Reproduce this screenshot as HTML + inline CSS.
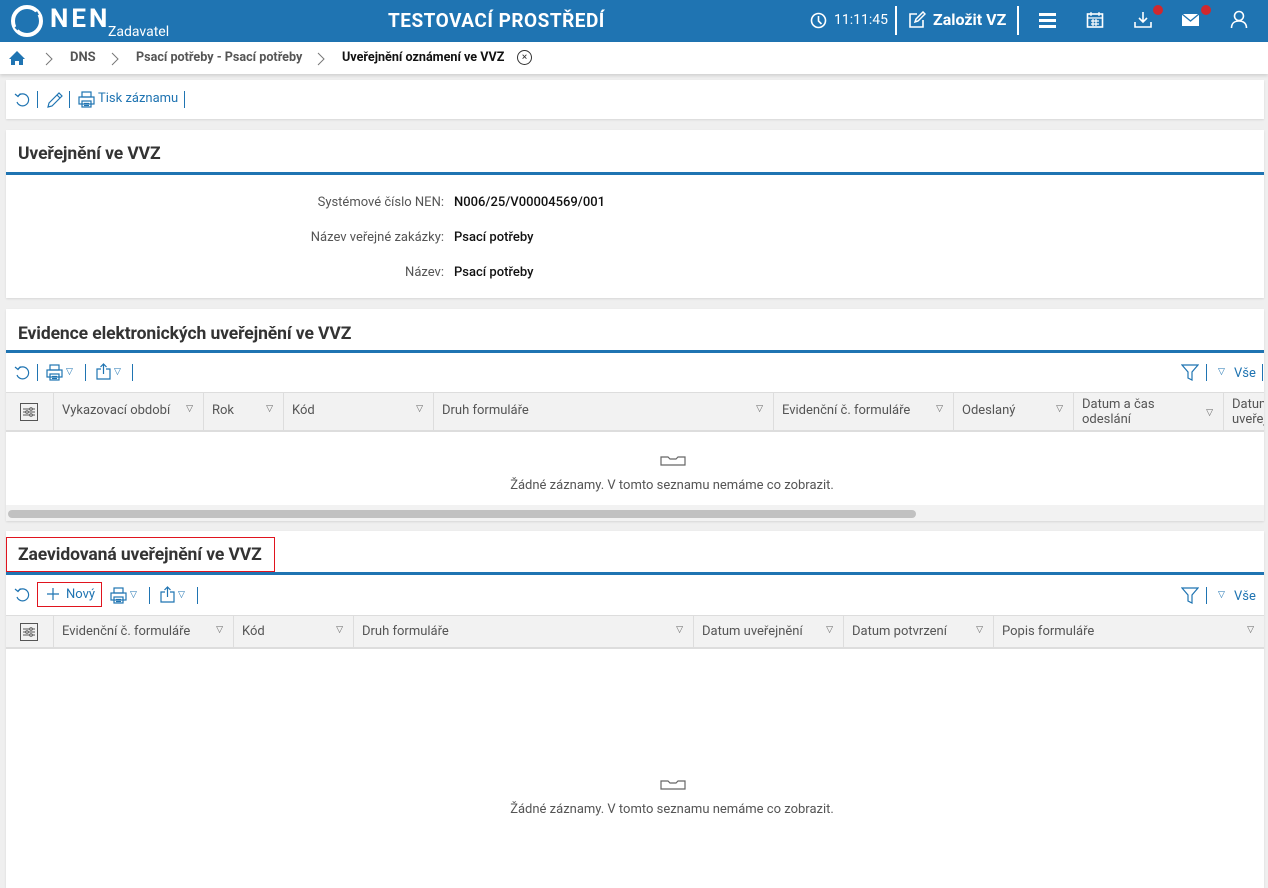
<!DOCTYPE html>
<html><head><meta charset="utf-8"><style>
*{box-sizing:border-box;margin:0;padding:0}
body{width:1268px;height:888px;overflow:hidden;background:#efefef;font-family:"Roboto","Liberation Sans",sans-serif;font-size:13px;color:#333;position:relative}
.abs{position:absolute}
.hdr{left:0;top:0;width:1268px;height:42px;background:#1f74b2;color:#fff}
.bc{left:0;top:42px;width:1268px;height:32px;background:#fff;box-shadow:0 2px 3px rgba(0,0,0,.12)}
.panel{background:#fff;left:6px;width:1258px;box-shadow:0 1px 2px rgba(0,0,0,.1)}
.title{font-size:17.5px;font-weight:bold;color:#333;letter-spacing:-.1px}
.bl{height:3px;background:#1f74b2;left:0;width:1258px}
.th{background:#f2f2f2;border-top:1px solid #ddd;border-bottom:2px solid #ddd;height:40px}
.col{position:absolute;top:0;height:100%;border-left:1px solid #ddd;color:#555;font-size:13px;padding:8px 8px}
.tri{position:absolute;right:10px;top:11px;font-size:9px;color:#666}
.sep{position:absolute;width:1px;height:17px;background:#1f74b2}
.blue{color:#1f74b2}
.empty{color:#555;font-size:13px;text-align:center;width:1332px;left:0}
svg.i{position:absolute;fill:none;stroke:#1f74b2;stroke-width:1.2}
.t{position:absolute;font-size:9px;color:#1f74b2}
</style></head><body>
<div class="abs hdr">
 <svg class="abs" style="left:10px;top:5px" width="34" height="32" viewBox="0 0 34 32"><circle cx="17" cy="16" r="14" fill="none" stroke="#fff" stroke-width="4"/><path d="M6 24 C12 18 20 12 28 8" stroke="#1f74b2" stroke-width="4" fill="none"/></svg>
 <div class="abs" style="left:50px;top:4px;font-size:26px;font-weight:bold;letter-spacing:3px">NEN</div>
 <div class="abs" style="left:108px;top:24px;font-size:14px">Zadavatel</div>
 <div class="abs" style="left:388px;top:9px;font-size:19px;font-weight:bold;letter-spacing:.5px">TESTOVACÍ PROSTŘEDÍ</div>
 <svg class="abs" style="left:810px;top:12px" width="17" height="17"><circle cx="8.5" cy="8.5" r="7" fill="none" stroke="#fff" stroke-width="1.6"/><path d="M8.5 4v5l3 3" stroke="#fff" stroke-width="1.6" fill="none"/></svg>
 <div class="abs" style="left:834px;top:12px;font-size:14px">11:11:45</div>
 <div class="abs" style="left:895px;top:6px;width:2px;height:29px;background:#fff"></div>
 <svg class="abs" style="left:908px;top:11px" width="18" height="18"><path d="M9 3H2v13h13V9" stroke="#fff" stroke-width="1.6" fill="none"/><path d="M7 11l1-3 7-7 2 2-7 7z" stroke="#fff" stroke-width="1.5" fill="none"/></svg>
 <div class="abs" style="left:933px;top:10px;font-size:16px;font-weight:bold">Založit VZ</div>
 <div class="abs" style="left:1017px;top:6px;width:2px;height:29px;background:#fff"></div>
 <div class="abs" style="left:1039px;top:13px;width:17px;height:3px;background:#fff;box-shadow:0 6px 0 #fff,0 12px 0 #fff"></div>
 <svg class="abs" style="left:1086px;top:11px" width="18" height="18"><rect x="1.5" y="3" width="15" height="13" fill="none" stroke="#fff" stroke-width="1.6"/><path d="M1.5 7h15M5 1v4M13 1v4M5 10h8M5 13h8M7 8v7M10 8v7" stroke="#fff" stroke-width="1.2"/></svg>
 <svg class="abs" style="left:1134px;top:11px" width="18" height="18"><path d="M9 1v10M5 7l4 4 4-4M1 11v5h16v-5" stroke="#fff" stroke-width="1.6" fill="none"/></svg>
 <div class="abs" style="left:1153px;top:5px;width:10px;height:10px;border-radius:50%;background:#d0282e"></div>
 <svg class="abs" style="left:1181px;top:13px" width="19" height="14"><rect x="1" y="1" width="17" height="12" fill="#fff"/><path d="M1 1l8.5 7L18 1" stroke="#1f74b2" stroke-width="1.3" fill="none"/></svg>
 <div class="abs" style="left:1201px;top:5px;width:10px;height:10px;border-radius:50%;background:#d0282e"></div>
 <svg class="abs" style="left:1230px;top:10px" width="18" height="19"><circle cx="9" cy="6" r="4.5" fill="none" stroke="#fff" stroke-width="1.6"/><path d="M1.5 18c0-5 3.5-7 7.5-7s7.5 2 7.5 7" stroke="#fff" stroke-width="1.6" fill="none"/></svg>
</div>
<div class="abs bc">
 <svg class="abs" style="left:8px;top:8px" width="18" height="16"><path d="M9 1L1 9h2v6h4v-4h4v4h4V9h2z" fill="#1f74b2"/></svg>
 <svg class="abs" style="left:45px;top:10px" width="8" height="14"><path d="M1 1l6 6-6 6" stroke="#777" fill="none"/></svg>
 <div class="abs" style="left:70px;top:8px;color:#555;font-weight:bold">DNS</div>
 <svg class="abs" style="left:111px;top:10px" width="8" height="14"><path d="M1 1l6 6-6 6" stroke="#777" fill="none"/></svg>
 <div class="abs" style="left:136px;top:8px;color:#555;font-weight:bold;font-size:12.6px">Psací potřeby - Psací potřeby</div>
 <svg class="abs" style="left:317px;top:10px" width="8" height="14"><path d="M1 1l6 6-6 6" stroke="#777" fill="none"/></svg>
 <div class="abs" style="left:342px;top:8px;color:#111;font-weight:bold;font-size:12.6px">Uveřejnění oznámení ve VVZ</div>
 <div class="abs" style="left:517px;top:8px;width:15px;height:15px;border:1px solid #333;border-radius:50%;font-size:10px;text-align:center;line-height:13px">×</div>
</div>

<svg width="0" height="0" style="position:absolute"><defs>
<g id="ref"><path d="M4 5A6 6 0 1 1 3 11"/><path d="M1 3l3 2.5L6.5 2.5"/></g>
<g id="prn"><rect x="4" y="1" width="9" height="5"/><rect x="1" y="6" width="15" height="7"/><rect x="4" y="10" width="9" height="6"/><path d="M6 12.5h5M6 14.5h5"/></g>
<g id="shr"><path d="M6 6H2v10h13V6h-4M8.5 11V1M5.5 4l3-3 3 3"/></g>
<g id="fun"><path d="M1 1h16l-6 7v8l-4-2V8z"/></g>
<g id="set"><rect x=".5" y=".5" width="17" height="17" stroke="#555"/><path d="M3 6h12M3 9h12M3 12h12" stroke="#555"/><circle cx="11" cy="6" r="1.3" fill="#fff" stroke="#555"/><circle cx="7" cy="9" r="1.3" fill="#fff" stroke="#555"/><circle cx="11" cy="12" r="1.3" fill="#fff" stroke="#555"/></g>
</defs></svg>

<div class="abs panel" style="top:80px;height:39px">
 <svg class="i" style="left:8px;top:11px" width="18" height="18"><use href="#ref"/></svg>
 <div class="sep" style="left:31px;top:11px"></div>
 <svg class="i" style="left:40px;top:11px" width="18" height="18"><path d="M2 16l1-4L13 2l3 3L6 15z M11 4l3 3"/></svg>
 <div class="sep" style="left:63px;top:11px"></div>
 <svg class="i" style="left:72px;top:11px" width="18" height="18"><use href="#prn"/></svg>
 <div class="abs blue" style="left:92px;top:11px">Tisk záznamu</div>
 <div class="sep" style="left:178px;top:11px"></div>
</div>
<div class="abs panel" style="top:130px;height:168px">
 <div class="abs title" style="left:12px;top:14px">Uveřejnění ve VVZ</div>
 <div class="abs bl" style="top:42px"></div>
 <div class="abs" style="left:0;width:438px;top:55px;text-align:right;color:#555;line-height:35px">Systémové číslo NEN:<br>Název veřejné zakázky:<br>Název:</div>
 <div class="abs" style="left:448px;top:55px;color:#111;line-height:35px;font-weight:500">N006/25/V00004569/001<br>Psací potřeby<br>Psací potřeby</div>
</div>
<div class="abs panel" style="top:309px;height:212px;overflow:hidden">
 <div class="abs title" style="left:12px;top:15px">Evidence elektronických uveřejnění ve VVZ</div>
 <div class="abs bl" style="top:41px"></div>
 <svg class="i" style="left:8px;top:55px" width="18" height="18"><use href="#ref"/></svg>
 <div class="sep" style="left:31px;top:55px"></div>
 <svg class="i" style="left:40px;top:55px" width="18" height="18"><use href="#prn"/></svg>
 <span class="t" style="left:60px;top:58px">▽</span>
 <div class="sep" style="left:79px;top:55px"></div>
 <svg class="i" style="left:89px;top:54px" width="18" height="18"><use href="#shr"/></svg>
 <span class="t" style="left:108px;top:58px">▽</span>
 <div class="sep" style="left:126px;top:55px"></div>
 <svg class="i" style="left:1175px;top:55px" width="18" height="18"><use href="#fun"/></svg>
 <div class="sep" style="left:1200px;top:55px"></div>
 <span class="t" style="left:1212px;top:58px">▽</span>
 <div class="abs blue" style="left:1228px;top:57px">Vše</div>
 <div class="sep" style="left:1256px;top:55px"></div>
 <div class="abs th" style="left:0;top:83px;width:1258px;height:40px">
  <div class="col" style="left:0;width:47px;border:0;padding:10px 14px"><svg width="18" height="18" fill="none"><use href="#set"/></svg></div>
  <div class="col" style="left:47px;width:150px;padding-top:10px">Vykazovací období<span class="tri">▽</span></div>
  <div class="col" style="left:197px;width:80px;padding-top:10px">Rok<span class="tri">▽</span></div>
  <div class="col" style="left:277px;width:150px;padding-top:10px">Kód<span class="tri">▽</span></div>
  <div class="col" style="left:427px;width:340px;padding-top:10px">Druh formuláře<span class="tri">▽</span></div>
  <div class="col" style="left:767px;width:180px;padding-top:10px">Evidenční č. formuláře<span class="tri">▽</span></div>
  <div class="col" style="left:947px;width:120px;padding-top:10px">Odeslaný<span class="tri">▽</span></div>
  <div class="col" style="left:1067px;width:150px;padding-top:4px;line-height:15px">Datum a čas<br>odeslání<span class="tri" style="top:13px">▽</span></div>
  <div class="col" style="left:1217px;width:60px;padding-top:4px;line-height:15px">Datum<br>uveřej</div>
 </div>
 <svg class="abs" style="left:654px;top:147px" width="26" height="10"><path d="M1 1h7l2 2h6l2-2h7v8H1z" fill="none" stroke="#666" stroke-width="1.2"/></svg>
 <div class="abs empty" style="top:169px">Žádné záznamy. V tomto seznamu nemáme co zobrazit.</div>
 <div class="abs" style="left:0;top:196px;width:1258px;height:16px;background:#f2f2f2"></div>
 <div class="abs" style="left:2px;top:201px;width:908px;height:8px;border-radius:4px;background:#c1c1c1"></div>
</div>
<div class="abs panel" style="top:531px;height:357px">
 <div class="abs" style="left:0;top:6px;width:269px;height:35px;border:1px solid #e0141e"></div>
 <div class="abs title" style="left:12px;top:14px">Zaevidovaná uveřejnění ve VVZ</div>
 <div class="abs bl" style="top:41px"></div>
 <svg class="i" style="left:8px;top:55px" width="18" height="18"><use href="#ref"/></svg>
 <div class="abs" style="left:31px;top:51px;width:65px;height:25px;border:1px solid #e0141e"></div>
 <svg class="i" style="left:40px;top:56px" width="14" height="14"><path d="M7 1v12M1 7h12"/></svg>
 <div class="abs blue" style="left:60px;top:56px">Nový</div>
 <svg class="i" style="left:104px;top:56px" width="18" height="18"><use href="#prn"/></svg>
 <span class="t" style="left:124px;top:59px">▽</span>
 <div class="sep" style="left:143px;top:56px"></div>
 <svg class="i" style="left:153px;top:55px" width="18" height="18"><use href="#shr"/></svg>
 <span class="t" style="left:172px;top:59px">▽</span>
 <div class="sep" style="left:191px;top:56px"></div>
 <svg class="i" style="left:1175px;top:56px" width="18" height="18"><use href="#fun"/></svg>
 <div class="sep" style="left:1200px;top:56px"></div>
 <span class="t" style="left:1212px;top:59px">▽</span>
 <div class="abs blue" style="left:1228px;top:58px">Vše</div>
 <div class="abs th" style="left:0;top:84px;width:1258px;height:34px">
  <div class="col" style="left:0;width:47px;border:0;padding:7px 14px"><svg width="18" height="18" fill="none"><use href="#set"/></svg></div>
  <div class="col" style="left:47px;width:180px">Evidenční č. formuláře<span class="tri" style="top:9px">▽</span></div>
  <div class="col" style="left:227px;width:120px">Kód<span class="tri" style="top:9px">▽</span></div>
  <div class="col" style="left:347px;width:340px">Druh formuláře<span class="tri" style="top:9px">▽</span></div>
  <div class="col" style="left:687px;width:150px">Datum uveřejnění<span class="tri" style="top:9px">▽</span></div>
  <div class="col" style="left:837px;width:150px">Datum potvrzení<span class="tri" style="top:9px">▽</span></div>
  <div class="col" style="left:987px;width:271px">Popis formuláře<span class="tri" style="top:9px">▽</span></div>
 </div>
 <svg class="abs" style="left:654px;top:249px" width="26" height="10"><path d="M1 1h7l2 2h6l2-2h7v8H1z" fill="none" stroke="#666" stroke-width="1.2"/></svg>
 <div class="abs empty" style="top:271px">Žádné záznamy. V tomto seznamu nemáme co zobrazit.</div>
</div>
</body></html>
